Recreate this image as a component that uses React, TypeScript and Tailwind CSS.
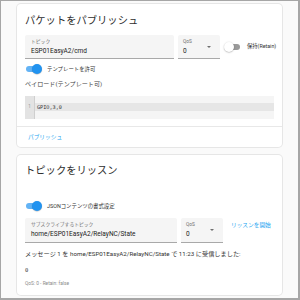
// MQTT publish / listen panel (scaled down)

function Field({ label, value, className }: { label: string; value: string; className: string }) {
  return (
    <div className={`flex flex-col bg-[#f5f5f5] border-b border-[#a9a9a9] rounded-t-[2px] pl-[6px] pt-[4px] ${className}`}>
      <span className="text-[4.8px] leading-[6px] text-[#6f6f6f]">{label}</span>
      <span className="text-[6.5px] leading-[8px] text-[#222] mt-[2px]">{value}</span>
    </div>
  );
}

function QosSelect({ className }: { className: string }) {
  return (
    <div className={`relative flex flex-col bg-[#f5f5f5] border-b border-[#a9a9a9] rounded-t-[2px] w-[42px] pl-[5px] pt-[4px] ${className}`}>
      <span className="text-[4.8px] leading-[6px] text-[#6f6f6f]">QoS</span>
      <span className="text-[6.5px] leading-[8px] text-[#222] mt-[2px]">0</span>
      <svg className="absolute right-[9px] top-[11px]" width="4" height="2" viewBox="0 0 4 2">
        <polygon points="0,0 4,0 2,2" fill="#6f6f6f" />
      </svg>
    </div>
  );
}

function Toggle({ on }: { on: boolean }) {
  if (on) {
    return (
      <div className="relative w-[17px] h-[10px] flex items-center shrink-0">
        <div className="w-[15px] h-[6px] rounded-full bg-[#63b3f5] ml-[1px]" />
        <div className="absolute right-0 top-0 w-[10px] h-[10px] rounded-full bg-[#2193f0] shadow-[0_0.5px_1px_rgba(0,0,0,0.3)]" />
      </div>
    );
  }
  return (
    <div className="relative w-[16px] h-[10px] flex items-center shrink-0">
      <div className="w-[14px] h-[6px] rounded-full bg-[#9a9a9a] ml-[2px]" />
      <div className="absolute left-0 top-0 w-[10px] h-[10px] rounded-full bg-white shadow-[0_0.5px_1.5px_rgba(0,0,0,0.35)]" />
    </div>
  );
}

export default function App() {
  return (
    <div className="w-[300px] h-[300px] overflow-hidden bg-[#fafafa] border-l border-t border-r-2 border-b-2 border-[#a6a6a6] font-['Roboto','Noto_Sans_CJK_JP',sans-serif]">
      <div className="pl-[16px] pt-[3px] flex flex-col gap-[8px]">
        {/* パブリッシュ */}
        <section className="w-[265px] h-[143px] bg-white rounded-[4px] ring-1 ring-[#e6e6e6] flex flex-col">
          <div className="px-[8px] pt-[10px]">
            <h2 className="text-[10.3px] leading-[14px] text-[#2e2e2e]">パケットをパブリッシュ</h2>
            <div className="mt-[7px] flex items-center">
              <Field label="トピック" value="ESP01EasyA2/cmd" className="w-[149px] h-[24px] shrink-0" />
              <QosSelect className="ml-[4px] h-[24px] shrink-0" />
              <div className="ml-[4px]">
                <Toggle on={false} />
              </div>
              <span className="ml-[7px] whitespace-nowrap text-[5.3px] text-[#333]">保持(Retain)</span>
            </div>
            <div className="mt-[5px] h-[10px] flex items-center">
              <Toggle on />
              <span className="ml-[5px] text-[5.4px] text-[#333]">テンプレートを許可</span>
            </div>
            <div className="mt-[6px] text-[6.1px] leading-[8px] text-[#444]">ペイロード(テンプレート可)</div>
            <div className="mt-[8px] h-[23px] bg-[#f5f5f5] flex">
              <div className="w-[10px] bg-[#e3e3e3] border-r border-[#cfcfcf] flex justify-center pt-[7px]">
                <span className="text-[4.5px] leading-[8px] text-[#999]">1</span>
              </div>
              <div className="flex-1 pt-[7px]">
                <div className="h-[8px] bg-[#e6e6e6] pl-[2px] text-[5.2px] leading-[8px] text-[#333] font-['DejaVu_Sans_Mono',monospace]">
                  GPIO,3,0
                </div>
              </div>
            </div>
          </div>
          <div className="mt-[7px] border-t border-[#e8e8e8] h-[21px] flex items-center pl-[11px]">
            <button className="text-[5.7px] text-[#1aa3f0]">パブリッシュ</button>
          </div>
        </section>

        {/* リッスン */}
        <section className="w-[265px] h-[140px] bg-white rounded-[4px] ring-1 ring-[#e6e6e6] px-[8px] pt-[9px] flex flex-col">
          <h2 className="text-[10.3px] leading-[14px] text-[#2e2e2e]">トピックをリッスン</h2>
          <div className="mt-[23px] h-[10px] flex items-center">
            <Toggle on />
            <span className="ml-[5px] text-[5.4px] text-[#333]">JSONコンテンツの書式設定</span>
          </div>
          <div className="mt-[7px] flex items-start">
            <Field label="サブスクライブするトピック" value="home/ESP01EasyA2/RelayNC/State" className="w-[152px] h-[25px]" />
            <QosSelect className="ml-[4px] h-[25px]" />
            <button className="ml-[8px] mt-[2px] whitespace-nowrap text-[5.7px] leading-[10px] text-[#1aa3f0]">リッスンを開始</button>
          </div>
          <p className="mt-[7px] whitespace-nowrap text-[6.2px] leading-[8px] text-[#333]">
            メッセージ 1 を home/ESP01EasyA2/RelayNC/State で 11:23 に受信しました:
          </p>
          <pre className="mt-[8px] text-[5.5px] leading-[8px] text-[#333] font-['DejaVu_Sans_Mono',monospace]">0</pre>
          <p className="mt-[6px] text-[4.8px] leading-[8px] text-[#8a8a8a]">QoS: 0 - Retain: false</p>
        </section>
      </div>
    </div>
  );
}
